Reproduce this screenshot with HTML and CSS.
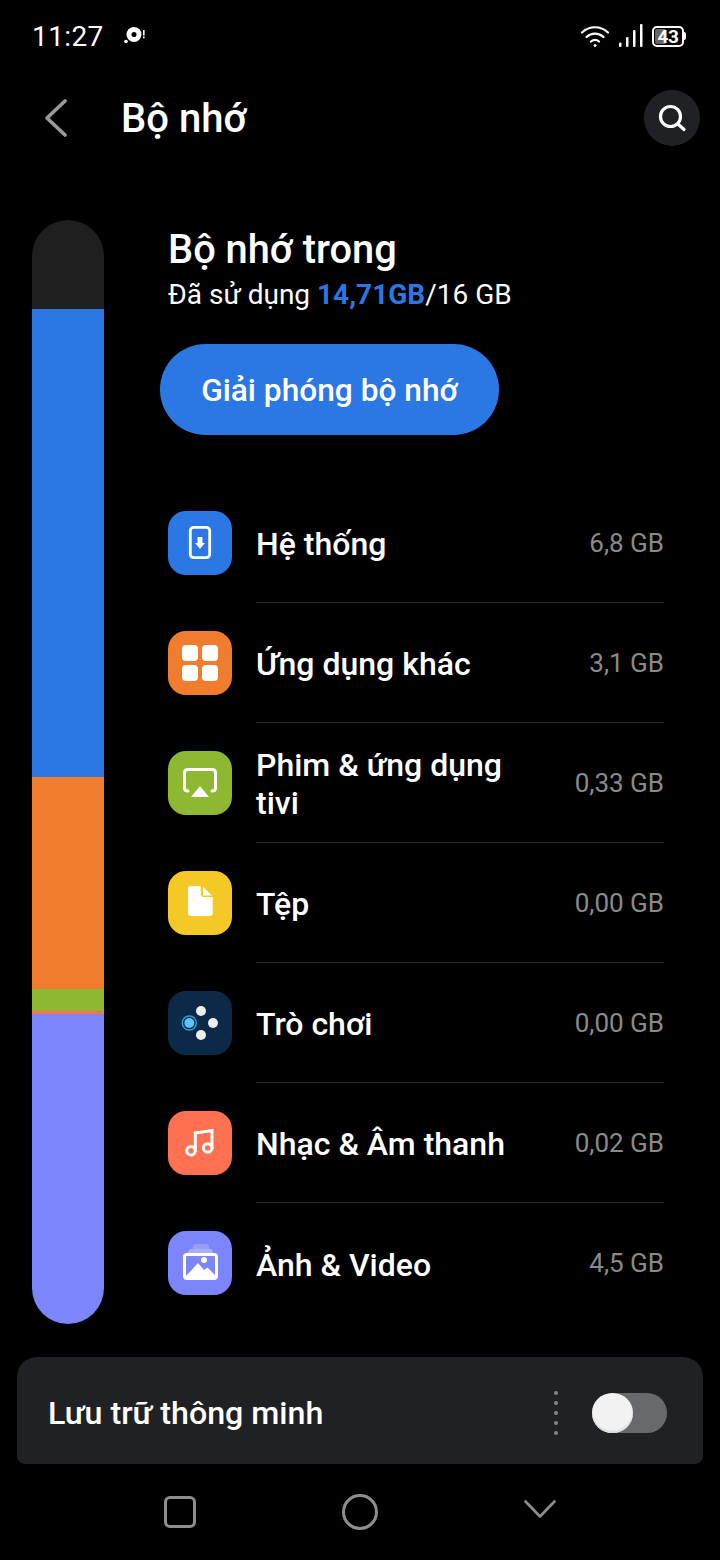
FILE: index.html
```html
<!DOCTYPE html>
<html lang="vi">
<head>
    <meta charset="UTF-8">
    <meta name="viewport" content="width=device-width, initial-scale=1.0">
    <title>Bộ nhớ</title>
    <link rel="stylesheet" href="styles.css">
</head>
<body>
    <div class="status-bar">
        <span class="clock">11:27</span>
        <svg class="notif-icon" width="24" height="24" viewBox="0 0 24 24">
            <circle cx="11" cy="10.500" r="7.500" fill="#fff"/>
            <circle cx="11" cy="10.500" r="2.500" fill="#000"/>
            <circle cx="3" cy="17.500" r="1.800" fill="#fff"/>
            <rect x="20" y="6" width="1.600" height="5.500" fill="#fff"/>
            <rect x="20" y="12.500" width="1.600" height="1.800" fill="#fff"/>
        </svg>
        <div class="status-right">
            <svg width="30" height="24" viewBox="0 0 30 24" fill="none" stroke="#fff" stroke-width="2.200" stroke-linecap="round">
                <path d="M2 8.500C9.500 1.500 20.500 1.500 28 8.500"/>
                <path d="M6.500 13C11.500 8.500 18.500 8.500 23.500 13"/>
                <path d="M11 17.500C13.500 15.500 16.500 15.500 19 17.500"/>
                <circle cx="15" cy="21.500" r="1" fill="#fff" stroke-width="1"/>
            </svg>
            <svg width="24" height="24" viewBox="0 0 24 24" fill="#fff">
                <rect x="0" y="18.500" width="2.500" height="4.500" rx="1"/>
                <rect x="7" y="13" width="2.500" height="10" rx="1"/>
                <rect x="14" y="6" width="2.500" height="17" rx="1"/>
                <rect x="21" y="0" width="2.500" height="23" rx="1"/>
            </svg>
            <div class="battery">
                <div class="battery-body"><div class="battery-fill"></div><span class="battery-num">43</span></div>
                <div class="battery-tip"></div>
            </div>
        </div>
    </div>

    <div class="header">
        <svg class="back" width="24" height="38" viewBox="0 0 24 38" fill="none" stroke="#9a9a9a" stroke-width="3.600" stroke-linecap="round" stroke-linejoin="round">
            <path d="M21 2L3 19L21 36"/>
        </svg>
        <h1 class="title">Bộ nhớ</h1>
        <div class="search">
            <svg width="30" height="30" viewBox="0 0 30 30" fill="none" stroke="#fff" stroke-width="3.200" stroke-linecap="round">
                <circle cx="13.500" cy="13.500" r="10"/>
                <path d="M21.500 21.500L27 26.500"/>
            </svg>
        </div>
    </div>

    <div class="main">
        <div class="usage-bar">
            <div class="seg seg-free"></div>
            <div class="seg seg-system"></div>
            <div class="seg seg-apps"></div>
            <div class="seg seg-movies"></div>
            <div class="seg seg-music"></div>
            <div class="seg seg-photos"></div>
        </div>
        <div class="content">
            <h2 class="storage-title">Bộ nhớ trong</h2>
            <p class="storage-used">Đã sử dụng <b>14,71GB</b>/16 GB</p>
            <div class="free-btn">Giải phóng bộ nhớ</div>

            <div class="list">
                <div class="row">
                    <div class="icon ic-system">
                        <svg width="40" height="40" viewBox="0 0 40 40">
                            <rect x="10.300" y="4.300" width="19.400" height="30.400" rx="3.500" fill="none" stroke="#fff" stroke-width="2.800"/>
                            <path d="M17.500 14h5v6H25L20 26L15 20h2.500z" fill="#fff"/>
                        </svg>
                    </div>
                    <div class="row-body"><span class="row-name">Hệ thống</span><span class="row-size">6,8 GB</span></div>
                </div>
                <div class="row">
                    <div class="icon ic-apps">
                        <svg width="40" height="40" viewBox="0 0 40 40" fill="#fff">
                            <rect x="2" y="2" width="16" height="16" rx="4"/>
                            <rect x="22" y="2" width="16" height="16" rx="4"/>
                            <rect x="2" y="22" width="16" height="16" rx="4"/>
                            <rect x="22" y="22" width="16" height="16" rx="4"/>
                        </svg>
                    </div>
                    <div class="row-body"><span class="row-name">Ứng dụng khác</span><span class="row-size">3,1 GB</span></div>
                </div>
                <div class="row">
                    <div class="icon ic-movies">
                        <svg width="40" height="40" viewBox="0 0 40 40">
                            <path d="M8 28c-2.500 0-3.500-1-3.500-3V10c0-2.500 1.500-3.500 3.500-3.500h24c2 0 3.500 1 3.500 3.500v15c0 2-1 3-3.500 3" fill="none" stroke="#fff" stroke-width="3" stroke-linecap="round"/>
                            <path d="M20 23L29 34H11z" fill="#fff"/>
                        </svg>
                    </div>
                    <div class="row-body"><span class="row-name">Phim &amp; ứng dụng tivi</span><span class="row-size">0,33 GB</span></div>
                </div>
                <div class="row">
                    <div class="icon ic-files">
                        <svg width="40" height="40" viewBox="0 0 40 40" fill="#fff">
                            <path d="M11 3H20.700V10.500C20.700 12.500 22 14 24 14H32.700V30c0 2-1 3-3 3H11c-2 0-3-1-3-3V6c0-2 1-3 3-3z"/>
                            <path d="M23 3.700L32 12.500H23z"/>
                        </svg>
                    </div>
                    <div class="row-body"><span class="row-name">Tệp</span><span class="row-size">0,00 GB</span></div>
                </div>
                <div class="row">
                    <div class="icon ic-games">
                        <svg width="40" height="40" viewBox="0 0 40 40">
                            <circle cx="9.300" cy="20" r="7" fill="none" stroke="#1ea5dc" stroke-width="1.400"/>
                            <circle cx="9.300" cy="20" r="5" fill="#5cc3ff"/>
                            <circle cx="21" cy="8" r="5" fill="#eeeeee"/>
                            <circle cx="33" cy="20" r="5" fill="#eeeeee"/>
                            <circle cx="21" cy="32" r="5" fill="#eeeeee"/>
                        </svg>
                    </div>
                    <div class="row-body"><span class="row-name">Trò chơi</span><span class="row-size">0,00 GB</span></div>
                </div>
                <div class="row">
                    <div class="icon ic-music">
                        <svg width="40" height="40" viewBox="0 0 40 40" fill="none" stroke="#fff" stroke-width="3" stroke-linecap="round">
                            <circle cx="11" cy="27.700" r="4.300"/>
                            <circle cx="27.700" cy="25" r="4.300"/>
                            <path d="M15.300 27.700V10L32 7.500V25"/>
                        </svg>
                    </div>
                    <div class="row-body"><span class="row-name">Nhạc &amp; Âm thanh</span><span class="row-size">0,02 GB</span></div>
                </div>
                <div class="row">
                    <div class="icon ic-photos">
                        <svg width="40" height="40" viewBox="0 0 40 40">
                            <path d="M13 6V4c0-2 1-3 3-3h10c2 0 3 1 3 3v2z" fill="#fff" opacity=".2"/>
                            <path d="M8 10c0-2 1-4 3-4h19c2 0 3 2 3 4z" fill="#fff" opacity=".35"/>
                            <rect x="4.500" y="11.500" width="32" height="24" rx="2.500" fill="none" stroke="#fff" stroke-width="3"/>
                            <path d="M6 35V33L18 20L24 27L27.500 24.500L35 32V35z" fill="#fff"/>
                            <circle cx="24" cy="17" r="3" fill="#fff"/>
                        </svg>
                    </div>
                    <div class="row-body"><span class="row-name">Ảnh &amp; Video</span><span class="row-size">4,5 GB</span></div>
                </div>
            </div>
        </div>
    </div>

    <div class="smart-card">
        <span class="smart-label">Lưu trữ thông minh</span>
        <div class="dots"><i></i><i></i><i></i><i></i><i></i></div>
        <div class="toggle"><div class="thumb"></div></div>
    </div>

    <div class="nav">
        <div class="nav-square"></div>
        <div class="nav-circle"></div>
        <svg class="nav-back" width="32" height="18" viewBox="0 0 32 18" fill="none" stroke="#8e8e8e" stroke-width="2.600" stroke-linecap="round" stroke-linejoin="round">
            <path d="M1.500 1.500L16 16.500L30.500 1.500"/>
        </svg>
    </div>
</body>
</html>
```

FILE: styles.css
```css
/* Page */
body {
    margin: 0;
    width: 720px;
    height: 1560px;
    overflow: hidden;
    background: #000;
    color: #fff;
    font-family: Roboto, sans-serif;
}

h1, h2, p {
    margin: 0;
}

/* Status bar */
.status-bar {
    height: 72px;
    display: flex;
    align-items: center;
    padding: 0 34px 0 32px;
    box-sizing: border-box;
}

.clock {
    font-size: 28px;
    font-weight: 400;
    letter-spacing: 0.4px;
}

.notif-icon {
    margin-left: 19px;
}

.status-right {
    margin-left: auto;
    display: flex;
    align-items: center;
    gap: 9px;
}

.battery {
    display: flex;
    align-items: center;
}

.battery-body {
    width: 32px;
    height: 21px;
    border: 2px solid #fff;
    border-radius: 5px;
    box-sizing: border-box;
    display: flex;
    justify-content: center;
    align-items: center;
    position: relative;
}

.battery-fill {
    position: absolute;
    left: 1px;
    top: 1px;
    bottom: 1px;
    width: 11px;
    background: #666;
    border-radius: 2px;
}

.battery-num {
    position: relative;
    font-size: 19px;
    font-weight: 700;
    line-height: 17px;
    letter-spacing: -0.5px;
}

.battery-tip {
    width: 2px;
    height: 8px;
    background: #fff;
    border-radius: 0 2px 2px 0;
}

/* Header */
.header {
    height: 92px;
    display: flex;
    align-items: center;
    padding: 0 20px 0 44px;
}

.back {
    margin-right: 53px;
}

.title {
    font-size: 40px;
    font-weight: 500;
}

.search {
    margin-left: auto;
    width: 56px;
    height: 56px;
    border-radius: 50%;
    background: #202125;
    display: flex;
    align-items: center;
    justify-content: center;
}

/* Main area */
.main {
    display: flex;
    padding: 56px 56px 0 32px;
}

.usage-bar {
    width: 72px;
    height: 1104px;
    border-radius: 36px;
    overflow: hidden;
    display: flex;
    flex-direction: column;
    flex-shrink: 0;
}

.seg-free { height: 89px; background: #1f1f1f; }
.seg-system { height: 468px; background: #2b78e4; }
.seg-apps { height: 212px; background: #f07c2e; }
.seg-movies { height: 22px; background: #8fb832; }
.seg-music { height: 3px; background: #ff7150; }
.seg-photos { flex: 1; background: #7c85fa; }

.content {
    flex: 1;
    margin-left: 64px;
}

.storage-title {
    font-size: 39.800px;
    font-weight: 500;
    line-height: 60px;
}

.storage-used {
    font-size: 28px;
    line-height: 30px;
}

.storage-used b {
    color: #2b78e4;
    font-weight: 700;
}

.free-btn {
    margin: 34px 0 48px -8px;
    width: 339px;
    height: 91px;
    padding-top: 2px;
    box-sizing: border-box;
    border-radius: 46px;
    background: #2b78e4;
    font-size: 31.700px;
    font-weight: 500;
    display: flex;
    align-items: center;
    justify-content: center;
}

/* Category list */
.row {
    height: 120px;
    display: flex;
    align-items: center;
}

.row-body {
    flex: 1;
    height: 120px;
    margin-left: 24px;
    display: flex;
    align-items: center;
    justify-content: space-between;
    border-bottom: 1px solid #262626;
    box-sizing: border-box;
}

.row:last-child .row-body {
    border-bottom: none;
}

.row-name {
    font-size: 32px;
    font-weight: 500;
    line-height: 38px;
    width: 270px;
    margin-top: 3px;
}

.row-size {
    font-size: 26px;
    color: #8a8a8a;
}

.icon {
    width: 64px;
    height: 64px;
    border-radius: 18px;
    display: flex;
    align-items: center;
    justify-content: center;
    flex-shrink: 0;
    overflow: hidden;
}

.ic-system { background: #2b78e4; }
.ic-apps { background: #f07c2e; }
.ic-movies { background: #8fb832; }
.ic-files { background: #f5c925; }
.ic-games { background: #0c2a47; }
.ic-music { background: #ff7150; }
.ic-photos { background: #7c85fa; }

/* Smart storage card */
.smart-card {
    margin: 33px 17px 0;
    height: 107px;
    box-sizing: border-box;
    border-radius: 20px 20px 8px 8px;
    background: #202125;
    display: flex;
    align-items: center;
    padding: 5px 36px 0 31px;
}

.smart-label {
    font-size: 32.200px;
    font-weight: 500;
}

.dots {
    margin-left: auto;
    display: flex;
    flex-direction: column;
    gap: 6px;
    margin-right: 34px;
}

.dots i {
    width: 4px;
    height: 4px;
    border-radius: 50%;
    background: #85868a;
}

.toggle {
    width: 75px;
    height: 40px;
    border-radius: 20px;
    background: #68696c;
}

.thumb {
    width: 41px;
    height: 40px;
    border-radius: 50%;
    background: #f2f2f2;
    box-shadow: inset 0 -2px 2px #d8d8d8;
}

/* Navigation */
.nav {
    height: 96px;
    display: flex;
    align-items: center;
    padding: 0 164px;
    justify-content: space-between;
}

.nav-square {
    width: 32px;
    height: 32px;
    border: 3px solid #8e8e8e;
    border-radius: 6px;
    box-sizing: border-box;
}

.nav-circle {
    width: 36px;
    height: 36px;
    border: 3px solid #8e8e8e;
    border-radius: 50%;
    box-sizing: border-box;
}

.nav-back {
    margin-bottom: 6px;
}
```
